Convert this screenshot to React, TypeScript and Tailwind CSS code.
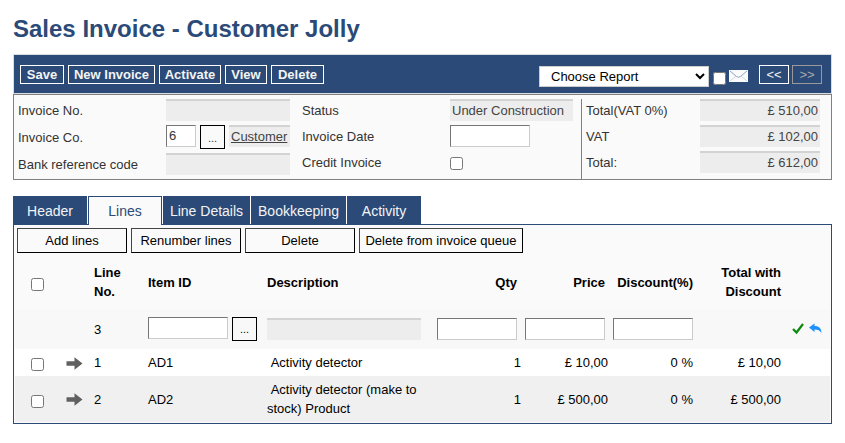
import React from 'react'

const lines = [
  { no: 1, item: 'AD1', description: 'Activity detector', qty: '1', price: '£ 10,00', discount: '0 %', total: '£ 10,00', row: 'h-[27px] bg-white' },
  { no: 2, item: 'AD2', description: 'Activity detector (make to stock) Product', qty: '1', price: '£ 500,00', discount: '0 %', total: '£ 500,00', row: 'h-[46px] bg-[#f0f0f0]' },
]

const totals = [
  { id: 'net', label: 'Total(VAT 0%)', value: '£ 510,00' },
  { id: 'vat', label: 'VAT', value: '£ 102,00' },
  { id: 'total', label: 'Total:', value: '£ 612,00' },
]

const readOnly = 'h-[22px] min-w-0 bg-[#ededed] border-t-2 border-[#d3d3d3] text-[#444] px-[2px] outline-none'
const textBox = 'h-[22px] min-w-0 bg-white border border-t-[#767676] border-l-[#767676] border-r-[#cbcbcb] border-b-[#cbcbcb] px-[2px] outline-none'
const checkBox = 'block size-[13px] m-0'

const Toolbar = () => {
  const button = 'h-[19px] whitespace-nowrap border border-white font-bold leading-[17px] text-[#f4f4f4]'
  return (
    <div className="flex h-10 items-center justify-between border border-[#d9dde3] bg-[#2b4a78] pl-[6px] pr-[9px]">
      <div className="flex gap-1">
        <button className={`${button} w-11`}>Save</button>
        <button className={`${button} w-[87px]`}>New Invoice</button>
        <button className={`${button} w-[62px]`}>Activate</button>
        <button className={`${button} w-[42px]`}>View</button>
        <button className={`${button} w-[53px]`}>Delete</button>
      </div>
      <div className="flex items-start pt-1">
        <select aria-label="Report" className="mt-px h-[21px] w-[170px] border border-[#ccc] bg-white pl-[7px] text-black">
          <option>Choose Report</option>
        </select>
        <input type="checkbox" aria-label="Send by mail" className={`${checkBox} ml-1 mt-[7px]`} />
        <svg className="ml-[3px] mt-[5px]" width="19" height="12" viewBox="0 0 19 12" fill="none">
          <rect width="19" height="12" fill="#fafafa" />
          <path d="M1 11L7 6M18 11L12 6" stroke="#d3d9e3" />
          <path d="M1 1L7.500 6.500Q9.500 8 11.500 6.500L18 1" stroke="#8fa3c4" />
        </svg>
        <button className="ml-[11px] h-[19px] w-[30px] border border-white leading-[17px] text-[#f4f4f4]">&lt;&lt;</button>
        <button disabled className="ml-[3px] h-[19px] w-[30px] border border-[#999] leading-[17px] text-[#aaa]">&gt;&gt;</button>
      </div>
    </div>
  )
}

const InvoiceForm = () => (
  <div className="flex justify-between border border-[#808080] bg-[#fafafa] pl-1 pr-[11px] pt-1 text-[#333]">
    <div className="grid grid-cols-[148px_124px] content-start gap-y-1 leading-[24px]">
      <label htmlFor="invoice-no" className="h-[22px]">Invoice No.</label>
      <input id="invoice-no" readOnly className={readOnly} />
      <label htmlFor="invoice-co" className="h-6 leading-[26px]">Invoice Co.</label>
      <div className="flex gap-1">
        <input id="invoice-co" defaultValue="6" className={`${textBox} w-[30px]`} />
        <button aria-label="Select company" className="h-6 w-[25px] border border-black text-[11px]">...</button>
        <a href="#customer" className={`${readOnly} flex-1 overflow-hidden leading-[20px] underline`}>Customer</a>
      </div>
      <label htmlFor="bank-ref" className="h-[22px]">Bank reference code</label>
      <input id="bank-ref" readOnly className={readOnly} />
    </div>
    <div className="grid grid-cols-[148px_123px] content-start gap-y-1 pl-1 leading-[24px]">
      <label htmlFor="status" className="h-[22px]">Status</label>
      <input id="status" readOnly value="Under Construction" className={readOnly} />
      <label htmlFor="invoice-date" className="h-[22px]">Invoice Date</label>
      <input id="invoice-date" className={`${textBox} w-20`} />
      <label htmlFor="credit" className="h-[22px]">Credit Invoice</label>
      <input id="credit" type="checkbox" className={`${checkBox} mt-[6px]`} />
    </div>
    <div className="grid h-20 grid-cols-[114px_120px] content-start gap-y-1 border-l border-[#808080] pl-1 leading-[24px]">
      {totals.map((t) => (
        <React.Fragment key={t.id}>
          <label htmlFor={t.id} className="h-[22px]">{t.label}</label>
          <input id={t.id} readOnly value={t.value} className={`${readOnly} text-right`} />
        </React.Fragment>
      ))}
    </div>
  </div>
)

const Tabs = () => {
  const tab = 'h-[28px] bg-[#2b4a78] pt-[2px] text-[#f4f4f4] text-center'
  return (
    <div className="flex gap-px text-sm" role="tablist">
      <button role="tab" className={`${tab} w-[74px]`}>Header</button>
      <button role="tab" aria-selected="true" className="relative z-10 -mb-px h-[29px] w-[74px] border border-b-0 border-[#2b4a78] bg-[#fafafa] text-[#2b4a78]">Lines</button>
      <button role="tab" className={`${tab} w-[87px]`}>Line Details</button>
      <button role="tab" className={`${tab} w-[95px]`}>Bookkeeping</button>
      <button role="tab" className={`${tab} w-[74px]`}>Activity</button>
    </div>
  )
}

const LineActions = () => {
  const button = 'h-[25px] border border-black border-t-[#444] border-l-[#444]'
  return (
    <div className="flex gap-1 px-[3px] pt-[3px]">
      <button className={`${button} w-[110px]`}>Add lines</button>
      <button className={`${button} w-[110px]`}>Renumber lines</button>
      <button className={`${button} w-[110px]`}>Delete</button>
      <button className={`${button} w-[164px]`}>Delete from invoice queue</button>
    </div>
  )
}

const LinesTable = () => (
  <table className="w-full table-fixed border-collapse leading-[19px]">
    <colgroup>
      <col className="w-[47px]" />
      <col className="w-[28px]" />
      <col className="w-[54px]" />
      <col className="w-[119px]" />
      <col />
      <col className="w-[88px]" />
      <col className="w-[88px]" />
      <col className="w-[88px]" />
      <col className="w-[88px]" />
      <col className="w-[45px]" />
    </colgroup>
    <thead>
      <tr className="h-14 text-left">
        <th className="pl-4 pt-[6px]"><input type="checkbox" aria-label="Select all lines" className={checkBox} /></th>
        <th></th>
        <th className="px-1 pt-[2px]">Line<br />No.</th>
        <th className="px-1 pt-[2px]">Item ID</th>
        <th className="px-1 pt-[2px]">Description</th>
        <th className="px-1 pt-[2px] text-right">Qty</th>
        <th className="px-1 pt-[2px] text-right">Price</th>
        <th className="px-1 pt-[2px] text-right">Discount(%)</th>
        <th className="px-1 pt-[2px] text-right">Total with Discount</th>
        <th></th>
      </tr>
    </thead>
    <tbody>
      <tr className="h-10 bg-[#f8f8f8]">
        <td></td>
        <td></td>
        <td className="px-1">3</td>
        <td className="px-1">
          <div className="flex gap-1">
            <input aria-label="Item ID" className={`${textBox} w-20`} />
            <button aria-label="Select item" className="h-6 w-[25px] border border-black text-[11px]">...</button>
          </div>
        </td>
        <td className="pl-1 pr-3"><input aria-label="Description" readOnly className={`${readOnly} block w-full`} /></td>
        <td className="px-1"><input aria-label="Qty" className={`${textBox} block w-full`} /></td>
        <td className="px-1"><input aria-label="Price" className={`${textBox} block w-full`} /></td>
        <td className="px-1"><input aria-label="Discount" className={`${textBox} block w-full`} /></td>
        <td></td>
        <td>
          <div className="flex gap-[5px] pl-[7px]">
            <button aria-label="Accept line">
              <svg width="12" height="12" viewBox="0 0 12 12" fill="none"><path d="M1 6L4.500 9.500L11 1" stroke="#0a8a0a" strokeWidth="2.200" /></svg>
            </button>
            <button aria-label="Undo">
              <svg width="13" height="12" viewBox="0 0 13 12"><path d="M0 4.500L5.500 0.500V3C10 3 12.500 5.500 12.500 10C11 7.500 9 6.500 5.500 6.500V9Z" fill="#1e90ff" /></svg>
            </button>
          </div>
        </td>
      </tr>
      {lines.map((line) => (
        <tr key={line.no} className={line.row}>
          <td className="pl-4 pt-1"><input type="checkbox" aria-label={`Select line ${line.no}`} className={checkBox} /></td>
          <td className="pl-1 pt-px">
            <svg className="block" width="17" height="13" viewBox="0 0 17 13"><path d="M0.500 4.200H8.500V0.300L16.500 6.500L8.500 12.700V8.800H0.500Z" fill="#606060" /></svg>
          </td>
          <td className="px-1">{line.no}</td>
          <td className="px-1">{line.item}</td>
          <td className="pl-1 pr-2">&nbsp;{line.description}</td>
          <td className="text-right">{line.qty}</td>
          <td className="pr-px text-right">{line.price}</td>
          <td className="px-1 text-right">{line.discount}</td>
          <td className="px-1 text-right">{line.total}</td>
          <td></td>
        </tr>
      ))}
    </tbody>
  </table>
)

const App = () => {
  return (
    <main className="bg-white px-[13px] pb-5 pt-[14px] font-['Liberation_Sans',Arial,sans-serif] text-[13px] text-black">
      <h1 className="mb-[10px] text-2xl leading-[30px] font-bold text-[#2b4a78]">Sales Invoice - Customer Jolly</h1>
      <Toolbar />
      <InvoiceForm />
      <div className="mt-4">
        <Tabs />
        <div className="border border-[#2b4a78] bg-[#fafafa]">
          <LineActions />
          <div className="px-px pb-px">
            <LinesTable />
          </div>
        </div>
      </div>
    </main>
  )
}

export default App
